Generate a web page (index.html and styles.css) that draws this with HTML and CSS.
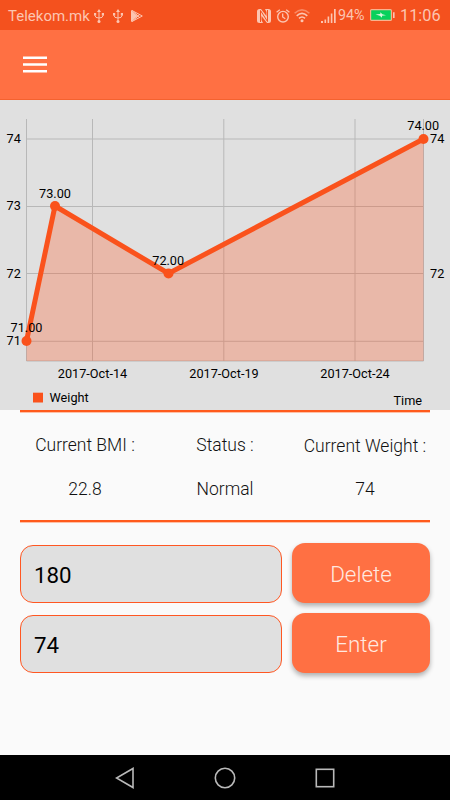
FILE: index.html
```html
<!doctype html>

<html lang="en">
<head>
  <meta charset="utf-8">
  <meta name="viewport" content="width=device-width, initial-scale=1">

  <title>Weight tracker</title>

  <link rel="stylesheet" href="styles.css">

</head>

<body>

<div class="statusbar">
  <span class="carrier">Telekom.mk</span>
  <svg class="usb" width="10" height="14" viewBox="0 0 10 14">
    <path d="M5 1.5V12M1 4.500V6.500Q1 9 5 9Q9 9 9 6.500V4.500" fill="none" stroke="#fcc5b1" stroke-width="1"/>
    <path d="M5 0L7 3H3zM0 4h2.200v2.400H0zM7.800 4H10v2.400H7.800z" fill="#fcc5b1"/>
    <circle cx="5" cy="12.400" r="1.500" fill="#fcc5b1"/>
  </svg>
  <svg class="usb second" width="10" height="14" viewBox="0 0 10 14">
    <path d="M5 1.5V12M1 4.500V6.500Q1 9 5 9Q9 9 9 6.500V4.500" fill="none" stroke="#fcc5b1" stroke-width="1"/>
    <path d="M5 0L7 3H3zM0 4h2.200v2.400H0zM7.800 4H10v2.400H7.800z" fill="#fcc5b1"/>
    <circle cx="5" cy="12.400" r="1.500" fill="#fcc5b1"/>
  </svg>
  <svg class="play" width="12" height="12" viewBox="0 0 12 12">
    <path d="M0 0V12L6.500 6z" fill="#fcc5b1"/>
    <path d="M.8 .4L11.300 6L.8 11.600M.8 .4L8.700 7.400M.8 11.600L8.700 4.600" fill="none" stroke="#fcc5b1" stroke-width="1"/>
  </svg>

  <svg class="nfc" width="14" height="14" viewBox="0 0 14 14">
    <path d="M2.500 0H4L9.500 7V3L8 0H11.500Q14 0 14 2.500V11.500Q14 14 11.500 14H10L4.500 7V11L6 14H2.500Q0 14 0 11.500V2.500Q0 0 2.500 0z" fill="#fcc5b1"/>
    <path d="M3.500 13V1.500L10.500 12.500V1" fill="none" stroke="#f4511e" stroke-width="1"/>
  </svg>
  <svg class="alarm" width="14" height="14" viewBox="0 0 14 14">
    <circle cx="7" cy="7.700" r="5.300" fill="none" stroke="#fcc5b1" stroke-width="1.400"/>
    <path d="M.6 3.300L3.800 .7M13.400 3.300L10.200 .7M6.700 4.500V8L9.300 9.800" fill="none" stroke="#fcc5b1" stroke-width="1.300"/>
  </svg>
  <svg class="wifi" width="16" height="14" viewBox="0 0 16 14">
    <path d="M.6 4.200Q8-2.400 15.400 4.200" fill="none" stroke="#f98a66" stroke-width="1.500"/>
    <path d="M2.700 6.900Q8 2 13.300 6.900M5 9.400Q8 6.600 11 9.400" fill="none" stroke="#fcc5b1" stroke-width="1.600"/>
    <circle cx="8" cy="11.800" r="1.500" fill="#fcc5b1"/>
  </svg>
  <svg class="signal" width="15" height="14" viewBox="0 0 15 14">
    <path d="M0 12h2v2H0zM3.500 10.500h1.600V14H3.500zM6.600 7.500h1.600V14H6.600zM9.800 4.500h1.600V14H9.800zM13 0h1.700v14H13z" fill="#fcc5b1"/>
  </svg>
  <span class="percent">94%</span>
  <svg class="battery" width="25" height="12" viewBox="0 0 25 12">
    <rect x=".6" y=".6" width="20.800" height="10.800" rx="1" fill="#08d15c" stroke="#f9b28e" stroke-width="1.200"/>
    <path d="M23 3.200h1.600v5.800H23z" fill="#fcc5b1"/>
    <path d="M5.500 5.500L10.300 5V3.300L12.400 5.200L16 6.200L12 6.800V8.700L9.800 6.700z" fill="#d9f8dc"/>
  </svg>
  <span class="clock">11:06</span>
</div>

<div class="toolbar">
  <svg class="menu" width="24" height="17" viewBox="0 0 24 17">
    <path d="M0 1.700H24M0 8.500H24M0 15.300H24"/>
  </svg>
</div>

<svg class="chart" width="450" height="310" viewBox="0 0 450 310">
  <!-- grid -->
  <g class="grid">
    <path d="M26.500 39H423.500M26.500 106.500H423.500M26.500 173.500H423.500M26.500 241.300H423.500"/>
    <path d="M92.500 19V261M223.800 19V261M355 19V261"/>
    <path d="M26.500 19V261H423.500V19"/>
  </g>

  <!-- weight series -->
  <path class="area" d="M26.500 241L55 106L168.500 173.500L423.500 39V261H26.500z"/>
  <path class="line" d="M26.500 241L55 106L168.500 173.500L423.500 39"/>
  <g class="dots">
    <circle cx="26.500" cy="241" r="5"/>
    <circle cx="55" cy="106" r="5"/>
    <circle cx="168.500" cy="173.500" r="5"/>
    <circle cx="423.500" cy="39" r="5"/>
  </g>

  <g class="middle">
    <text x="26.500" y="232">71.00</text>
    <text x="55" y="97.500">73.00</text>
    <text x="168.200" y="165">72.00</text>
    <text x="423.200" y="30">74.00</text>
    <text x="92.500" y="278">2017-Oct-14</text>
    <text x="224" y="278">2017-Oct-19</text>
    <text x="355" y="278">2017-Oct-24</text>
  </g>
  <text x="6.500" y="42.500">74</text>
  <text x="6.500" y="110">73</text>
  <text x="6.500" y="177.500">72</text>
  <text x="6.500" y="245">71</text>
  <text x="430" y="42.500">74</text>
  <text x="430" y="177.500">72</text>

  <rect class="legend" x="33" y="292.700" width="10" height="9.800"/>
  <text x="49.500" y="302.300">Weight</text>
  <text x="393.500" y="305">Time</text>
</svg>

<div class="summary">
  <div class="col">
    <div class="label">Current BMI :</div>
    <div class="value">22.8</div>
  </div>
  <div class="col status">
    <div class="label">Status :</div>
    <div class="value">Normal</div>
  </div>
  <div class="col weight">
    <div class="label">Current Weight :</div>
    <div class="value">74</div>
  </div>
</div>

<form class="entry">
  <input type="text" class="field" name="height" value="180">
  <button type="button" class="btn">Delete</button>
  <input type="text" class="field" name="weight" value="74">
  <button type="button" class="btn">Enter</button>
</form>

<div class="navbar">
  <svg width="20" height="22" viewBox="0 0 20 22">
    <path d="M18 1.500V20.500L1.500 11z"/>
  </svg>
  <svg width="22" height="22" viewBox="0 0 22 22">
    <circle cx="11" cy="11" r="9.700"/>
  </svg>
  <svg width="20" height="22" viewBox="0 0 20 22">
    <rect x="1.300" y="2.300" width="17.400" height="17.400"/>
  </svg>
</div>

</body>
</html>
```

FILE: styles.css
```css
* {
  box-sizing: border-box;
}
body {
  margin: 0;
  height: 800px;
  display: flex;
  flex-direction: column;
  overflow: hidden;
  background-color: #fafafa;
  font-family: Roboto, "Liberation Sans", sans-serif;
  color: #111;
}
svg {
  display: block;
  flex: none;
}

/* status bar */
.statusbar {
  display: flex;
  align-items: center;
  height: 30px;
  padding: 1px 10px 0 8px;
  background-color: #f4511e;
  color: #fcc5b1;
  line-height: 30px;
  white-space: nowrap;
}
.carrier {
  width: 86px;
  font-size: 15px;
}
.usb.second {
  margin-left: 9px;
}
.play {
  margin-left: 8px;
}
.nfc {
  margin-left: auto;
}
.alarm {
  margin-left: 5px;
}
.wifi {
  margin-left: 4px;
}
.signal {
  margin-left: 11px;
}
.percent {
  width: 32px;
  margin-left: 2px;
  font-size: 14.3px;
  margin-top: -2px;
}
.battery {
  margin-top: -1px;
}
.clock {
  width: 40px;
  margin-left: 5px;
  font-size: 16.3px;
}

/* app bar */
.toolbar {
  height: 70px;
  padding: 26px 23px;
  background-color: #ff7043;
  border-bottom: 1px solid #f4622f;
}
.menu {
  fill: none;
  stroke: #fff;
  stroke-width: 2.4;
}

/* chart */
.chart {
  background-color: #e0e0e0;
}
.chart text {
  font-size: 12.7px;
  fill: #000;
}
.middle {
  text-anchor: middle;
}
.grid {
  fill: none;
  stroke: #b8b8b8;
  stroke-width: 1;
}
.area {
  fill: #ff5722;
  fill-opacity: .29;
}
.line {
  fill: none;
  stroke: #fa521c;
  stroke-width: 5;
}
.dots,
.legend {
  fill: #fa521c;
}

/* bmi / status / weight */
.summary {
  display: grid;
  grid-template-columns: 130px 150px 130px;
  height: 112px;
  margin: 0 20px;
  border-top: 2px solid #ff5a1c;
  border-bottom: 2px solid #ff5a1c;
  box-shadow: 0 1px 0 #ffc0a6, inset 0 1px 0 #ffc0a6;
  text-align: center;
  font-size: 17.5px;
  font-weight: 300;
  line-height: 22px;
  white-space: nowrap;
}
.label {
  margin-top: 22px;
}
.value {
  margin-top: 22px;
}
.weight .label {
  margin-top: 23px;
}
.weight .value {
  margin-top: 21px;
}

/* input rows */
.entry {
  display: grid;
  grid-template-columns: 262px 138px;
  grid-auto-rows: 60px;
  gap: 10px;
  margin: 20px 20px 0;
  padding-top: 1px;
  align-items: end;
}
.field {
  width: 262px;
  height: 58px;
  padding: 2px 13px 0;
  border: 1px solid #ff5722;
  border-radius: 13px;
  background-color: #e0e0e0;
  font-family: inherit;
  font-size: 22.3px;
  color: #000;
}
.btn {
  width: 138px;
  height: 60px;
  padding: 2px 0 0;
  border: none;
  border-radius: 13px;
  background-color: #ff7043;
  box-shadow: 0 3px 5px rgba(0, 0, 0, .3);
  font-family: inherit;
  font-size: 22.4px;
  font-weight: 300;
  color: #ffe9e0;
}

/* android navigation */
.navbar {
  display: flex;
  justify-content: center;
  align-items: center;
  gap: 79px;
  height: 45px;
  margin-top: auto;
  background-color: #000;
}
.navbar svg {
  fill: none;
  stroke: #b9b9b9;
  stroke-width: 1.6;
}
```
